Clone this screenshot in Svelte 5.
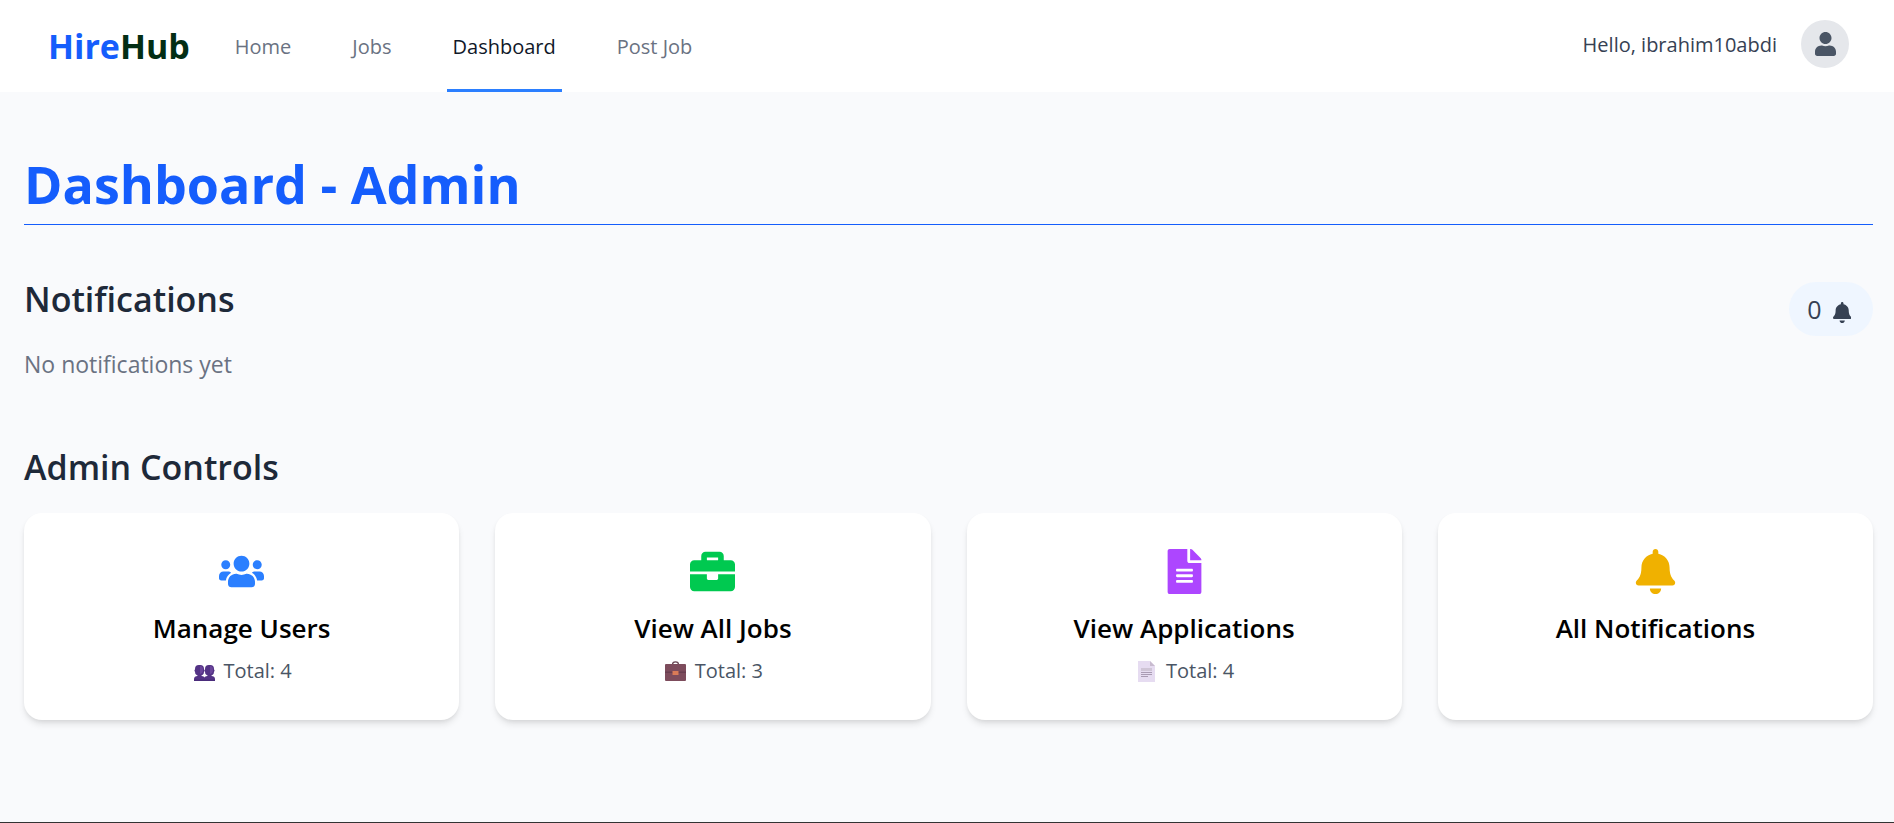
<script>
  const icons = {
    user: {
      box: '0 0 448 512',
      path: 'M224 256c70.7 0 128-57.3 128-128S294.7 0 224 0 96 57.3 96 128s57.3 128 128 128zm89.6 32h-16.7c-22.2 10.2-46.9 16-72.9 16s-50.6-5.8-72.9-16h-16.7C60.2 288 0 348.2 0 422.4V464c0 26.5 21.5 48 48 48h352c26.5 0 48-21.5 48-48v-41.6c0-74.2-60.2-134.4-134.4-134.4z'
    },
    users: {
      box: '0 0 640 512',
      path: 'M96 224c35.3 0 64-28.7 64-64s-28.7-64-64-64-64 28.7-64 64 28.7 64 64 64zm448 0c35.3 0 64-28.7 64-64s-28.7-64-64-64-64 28.7-64 64 28.7 64 64 64zm32 32h-64c-17.6 0-33.5 7.1-45.1 18.6 40.3 22.1 68.9 62 75.1 109.4h66c17.7 0 32-14.3 32-32v-32c0-35.3-28.7-64-64-64zm-256 0c61.9 0 112-50.1 112-112S381.9 32 320 32 208 82.1 208 144s50.1 112 112 112zm76.8 32h-8.3c-20.8 10-43.9 16-68.5 16s-47.6-6-68.5-16h-8.3C179.6 288 128 339.6 128 403.2V432c0 26.5 21.5 48 48 48h288c26.5 0 48-21.5 48-48v-28.8c0-63.6-51.6-115.2-115.2-115.2zm-223.7-13.4C161.5 263.1 145.6 256 128 256H64c-35.3 0-64 28.7-64 64v32c0 17.7 14.3 32 32 32h65.9c6.3-47.4 34.9-87.3 75.2-109.4z'
    },
    briefcase: {
      box: '0 0 512 512',
      path: 'M320 336c0 8.84-7.16 16-16 16h-96c-8.84 0-16-7.16-16-16v-48H0v144c0 25.6 22.4 48 48 48h416c25.6 0 48-22.4 48-48V288H320v48zm144-208h-80V80c0-25.6-22.4-48-48-48H176c-25.6 0-48 22.4-48 48v48H48c-25.6 0-48 22.4-48 48v80h512v-80c0-25.6-22.4-48-48-48zm-144 0H192V96h128v32z'
    },
    file: {
      box: '0 0 384 512',
      path: 'M224 136V0H24C10.7 0 0 10.7 0 24v464c0 13.3 10.7 24 24 24h336c13.3 0 24-10.7 24-24V160H248c-13.2 0-24-10.8-24-24zm64 236c0 6.6-5.4 12-12 12H108c-6.6 0-12-5.4-12-12v-8c0-6.6 5.4-12 12-12h168c6.6 0 12 5.4 12 12v8zm0-64c0 6.6-5.4 12-12 12H108c-6.6 0-12-5.4-12-12v-8c0-6.6 5.4-12 12-12h168c6.6 0 12 5.4 12 12v8zm0-72v8c0 6.6-5.4 12-12 12H108c-6.6 0-12-5.4-12-12v-8c0-6.6 5.4-12 12-12h168c6.6 0 12 5.4 12 12zm96-114.1v6.1H256V0h6.1c6.4 0 12.5 2.5 17 7l97.9 98c4.5 4.5 7 10.6 7 16.9z'
    },
    bell: {
      box: '0 0 448 512',
      path: 'M224 512c35.32 0 63.97-28.65 63.97-64H160.03c0 35.35 28.65 64 63.97 64zm215.39-149.71c-19.32-20.76-55.47-51.99-55.47-154.29 0-77.7-54.48-139.9-127.94-155.16V32c0-17.67-14.32-32-31.98-32s-31.98 14.33-31.98 32v20.84C118.56 68.1 64.08 130.3 64.08 208c0 102.3-36.15 133.53-55.47 154.29-6 6.45-8.66 14.16-8.61 21.71.11 16.4 12.98 32 32.1 32h383.8c19.12 0 32-15.6 32.1-32 .05-7.55-2.61-15.27-8.61-21.71z'
    }
  };

  const links = [
    { label: 'Home', href: '#home' },
    { label: 'Jobs', href: '#jobs' },
    { label: 'Dashboard', href: '#dashboard', active: true },
    { label: 'Post Job', href: '#post-job' }
  ];

  const cards = [
    { title: 'Manage Users', icon: 'users', tone: 'blue', total: 4, href: '#users' },
    { title: 'View All Jobs', icon: 'briefcase', tone: 'green', total: 3, href: '#all-jobs' },
    { title: 'View Applications', icon: 'file', tone: 'purple', total: 4, href: '#applications' },
    { title: 'All Notifications', icon: 'bell', tone: 'yellow', total: null, href: '#notifications' }
  ];
</script>

{#snippet icon(name)}
  <svg class="icon" viewBox={icons[name].box} fill="currentColor" aria-hidden="true">
    <path d={icons[name].path} />
  </svg>
{/snippet}

{#snippet mini(name)}
  <svg class="mini" viewBox="0 0 24 24" aria-hidden="true">
    {#if name === 'users'}
      <g id="person" fill="#533285">
        <rect x="3" y="4" width="9" height="10.500" rx="3.800" />
        <rect x="2.500" y="8" width="10" height="3" rx="1.500" />
        <path d="M5.500 12h4v3.500h-4z" />
        <path d="M2 20v-2c0-2 1.500-3 3.500-3h4c2 0 3.500 1 3.500 3v2z" />
        <path fill="#6b459b" d="M8 5c2.300 0 3 1.500 3 4s-1 3.600-3 4z" />
      </g>
      <use href="#person" x="10" />
      <path fill="#3f246b" d="M2 18.500h21V20H2z" opacity=".4" />
    {:else if name === 'briefcase'}
      <path fill="none" stroke="#664451" stroke-width="1.300" d="M9.500 3.500C9.500 1.700 10.500.8 12.500.8s3 .9 3 2.700" />
      <rect x="2" y="3" width="21" height="17" rx="1" fill="#7d4c5c" />
      <path fill="#693e50" d="M2 10.500h21V12H2z" />
      <path fill="#d97b57" d="M9.500 10h6v4h-6z" />
    {:else}
      <path fill="#e6dcf1" d="M4 0h12l5 5v16H4z" />
      <path fill="#c8bbcf" d="M16 0l5 5h-5z" />
      <path fill="#cfc5d6" d="M7 7h11v3H7z" />
      <path fill="#a99bb3" d="M7 11h11v1H7zM7 13h11v1H7zM7 15h7v1H7z" />
    {/if}
  </svg>
{/snippet}

<div class="page">
  <header>
    <a class="logo" href="#home"><span>Hire</span>Hub</a>
    <nav aria-label="Main">
      {#each links as link}
        <a href={link.href} class:active={link.active} aria-current={link.active ? 'page' : undefined}>{link.label}</a>
      {/each}
    </nav>
    <div class="account">
      <span>Hello, ibrahim10abdi</span>
      <button class="avatar" aria-label="Account">{@render icon('user')}</button>
    </div>
  </header>

  <main>
    <h1>Dashboard - Admin</h1>

    <section class="notifications">
      <div class="bar">
        <h2>Notifications</h2>
        <button class="pill"><span>0</span>{@render icon('bell')}</button>
      </div>
      <p>No notifications yet</p>
    </section>

    <section class="controls">
      <h2>Admin Controls</h2>
      <div class="grid">
        {#each cards as card}
          <a class="card {card.tone}" href={card.href}>
            {@render icon(card.icon)}
            <h3>{card.title}</h3>
            {#if card.total !== null}
              <p>{@render mini(card.icon)}<span>Total: {card.total}</span></p>
            {/if}
          </a>
        {/each}
      </div>
    </section>
  </main>
  <footer></footer>
</div>

<style>
  :global(body) {
    margin: 0;
    background: #f9fafc;
  }
  .page {
    font-family: 'Open Sans', 'Noto Sans', sans-serif;
    background: #f9fafc;
    color: #1e2939;
  }
  a {
    color: inherit;
    text-decoration: none;
  }
  button {
    border: 0;
    padding: 0;
    font: inherit;
    color: inherit;
    cursor: pointer;
  }
  h1, h2, h3, p {
    margin: 0;
  }
  .icon {
    display: block;
  }
  header {
    display: flex;
    align-items: stretch;
    height: 92px;
    padding: 0 45px 0 48px;
    background: #fff;
  }
  .logo {
    font-size: 34px;
    font-weight: 700;
    line-height: 92px;
    color: #032e15;
  }
  .logo span {
    color: #155dfc;
  }
  nav {
    display: flex;
    gap: 49px;
    margin-left: 39px;
  }
  nav a {
    padding: 5px 6px 0;
    border-bottom: 3px solid transparent;
    font-size: 20px;
    font-weight: 500;
    line-height: 84px;
    color: #6a7282;
  }
  nav a.active {
    border-color: #2b7fff;
    color: #101828;
  }
  .account {
    display: flex;
    align-items: center;
    gap: 24px;
    height: 88px;
    margin-left: auto;
    font-size: 20px;
    color: #364153;
  }
  .avatar {
    display: grid;
    place-items: center;
    width: 48px;
    height: 48px;
    border-radius: 50%;
    background: #e5e7eb;
    color: #4a5565;
  }
  .avatar .icon {
    height: 24px;
  }
  main {
    padding: 62px 21px 102px 24px;
  }
  h1 {
    padding-bottom: 10px;
    border-bottom: 1px solid #155dfc;
    font-size: 52px;
    font-weight: 700;
    line-height: 60px;
    color: #155dfc;
  }
  h2 {
    font-size: 34px;
    font-weight: 600;
    line-height: 44px;
  }
  .notifications {
    margin-top: 52px;
  }
  .bar {
    display: flex;
    align-items: center;
    justify-content: space-between;
  }
  .bar h2 {
    margin-bottom: 20px;
  }
  .pill {
    display: flex;
    align-items: center;
    gap: 11px;
    height: 54px;
    padding: 0 22px 0 18px;
    border-radius: 27px;
    background: #eff6ff;
    font-size: 25px;
    color: #364153;
  }
  .pill .icon {
    height: 21px;
    margin-top: 6px;
  }
  .notifications p {
    margin-top: 5px;
    font-size: 23px;
    line-height: 36px;
    color: #6a7282;
  }
  .controls {
    margin-top: 63px;
  }
  .grid {
    display: grid;
    grid-template-columns: repeat(4, 1fr);
    gap: 36px;
    margin-top: 24px;
  }
  .card {
    display: flex;
    flex-direction: column;
    align-items: center;
    padding: 36px 36px 35px;
    border-radius: 18px;
    background: #fff;
    box-shadow: 0 5px 7px -1px rgb(0 0 0 / 0.1), 0 2px 5px -2px rgb(0 0 0 / 0.1);
  }
  .card .icon {
    width: 45px;
    height: 45px;
  }
  .blue { color: #2b7fff; }
  .green { color: #00c950; }
  .purple { color: #ad46ff; }
  .yellow { color: #f0b100; }
  .card h3 {
    margin-top: 16px;
    font-size: 26px;
    font-weight: 600;
    line-height: 36px;
    color: #000;
  }
  .card p {
    display: flex;
    align-items: center;
    gap: 8px;
    margin-top: 11px;
    font-size: 20px;
    line-height: 28px;
    color: #4a5565;
  }
  .mini {
    width: 24px;
    height: 24px;
    margin-top: 4px;
  }
  footer {
    height: 1px;
    background: #333;
  }
</style>
